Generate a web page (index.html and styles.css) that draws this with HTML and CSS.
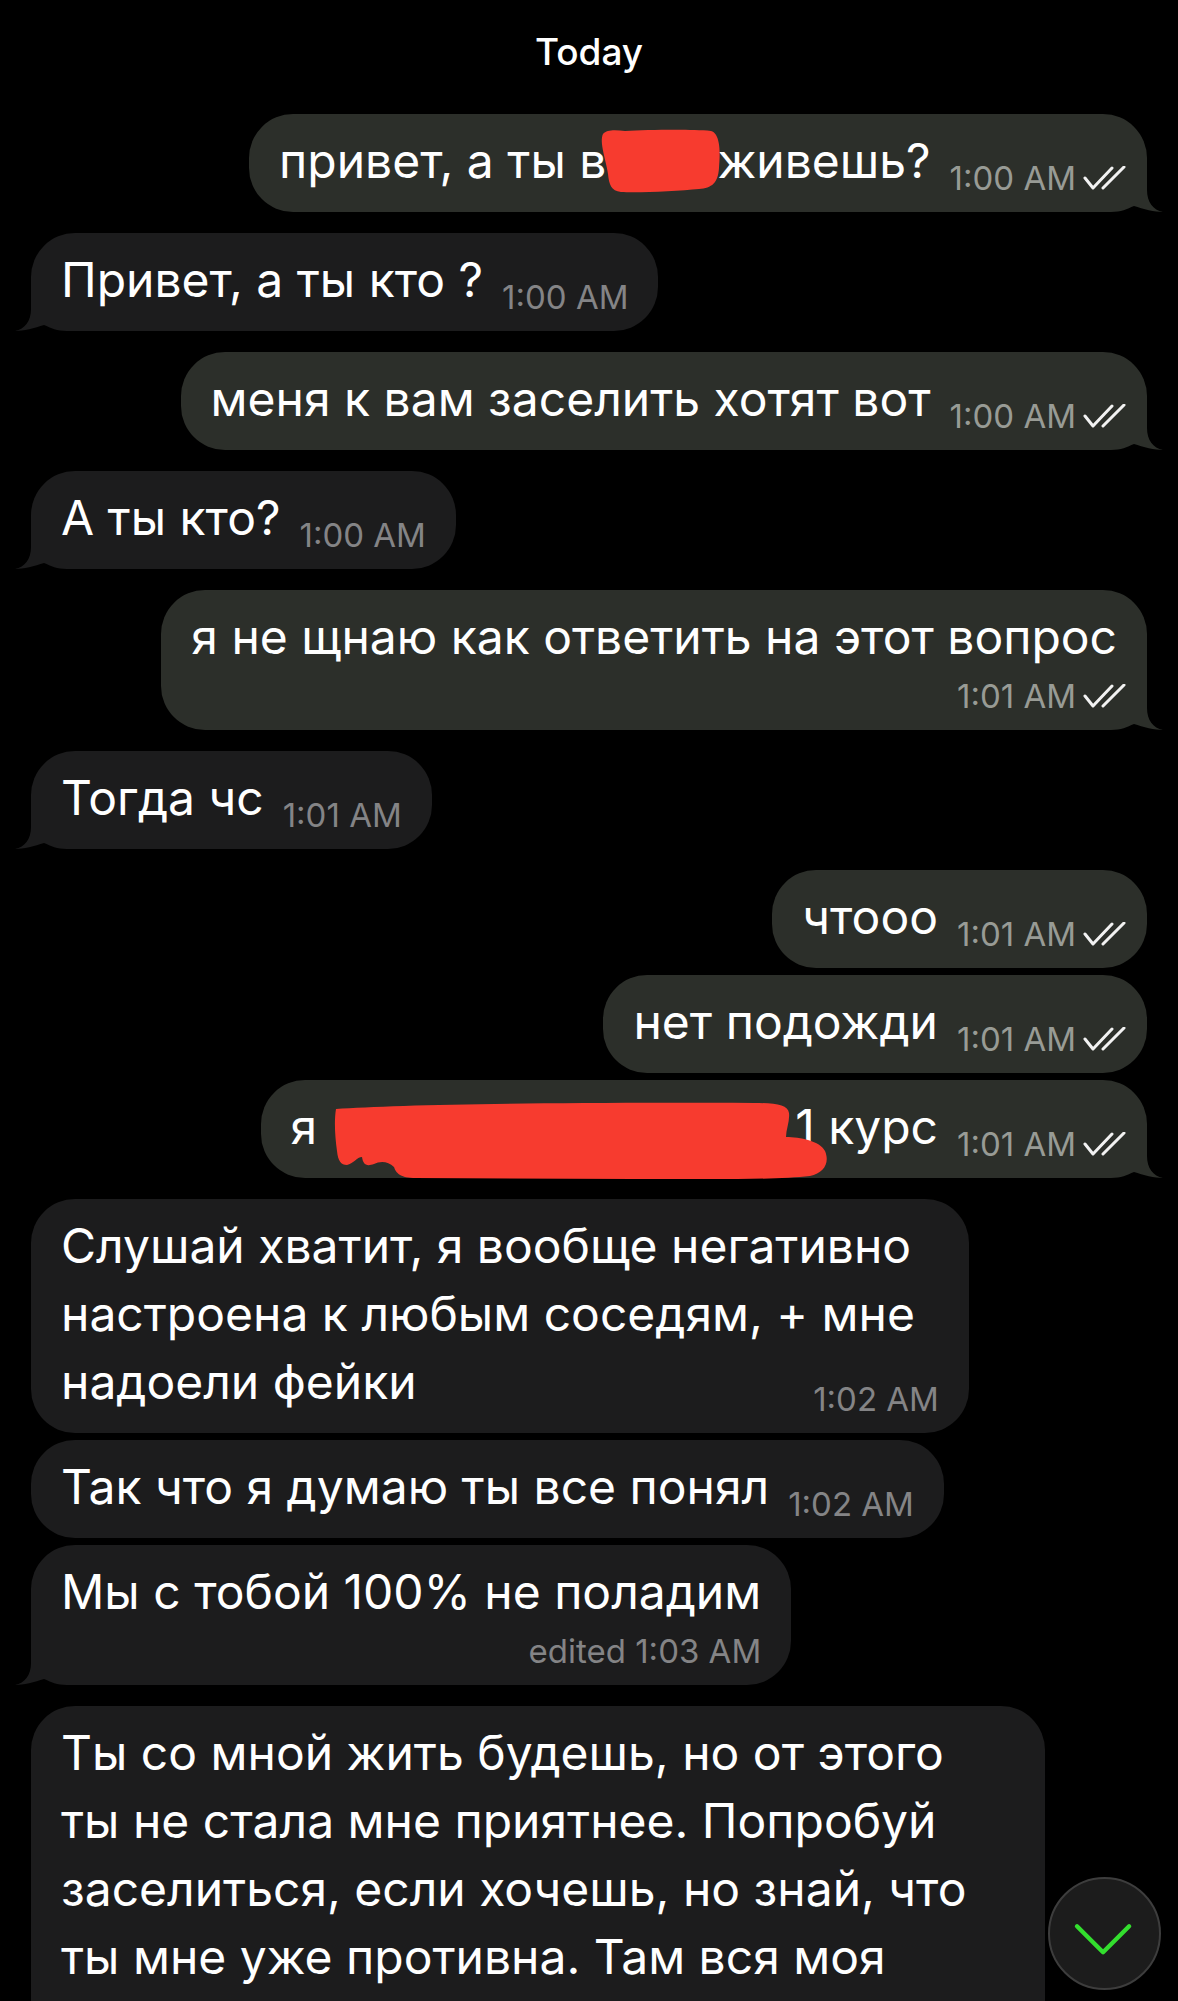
FILE: index.html
```html
<!DOCTYPE html>
<html lang="ru">
<head>
    <meta charset="UTF-8">
    <meta name="viewport" content="width=device-width, initial-scale=1.0">
    <title>Chat</title>
    <link rel="stylesheet" href="styles.css">
</head>
<body>

<div class="chat">
    <!-- Date header -->
    <div class="date">Today</div>

    <div class="msg out">
        <div class="bubble">
            <svg class="tail" viewBox="0 0 60 48"><path d="M44 0 L44 26 C44 38 50 46 60 48 C52 48 40 45 31 42 C24 45 18 48 8 48 L0 48 L0 0 Z"/></svg>
            <div class="row">
                <span class="text">привет, а ты в<span class="redact r1"><svg viewBox="0 0 124 66" width="124" height="66"><path d="M6 6 C10 1 20 2 28 3 C50 2 92 1 114 3 C122 5 124 20 122 40 C121 55 115 60 102 61 C82 63 42 65 24 64 C14 63 12 56 11 46 C9 32 2 14 6 6 Z"/></svg></span>живешь?</span>
                <span class="meta">1:00 AM<svg class="checks" viewBox="0 0 44 24"><polyline points="2,12 10,22 29,2"/><line x1="20" y1="22" x2="41" y2="1"/></svg></span>
            </div>
        </div>
    </div>

    <div class="msg in">
        <div class="bubble">
            <svg class="tail" viewBox="0 0 60 48"><path d="M44 0 L44 26 C44 38 50 46 60 48 C52 48 40 45 31 42 C24 45 18 48 8 48 L0 48 L0 0 Z"/></svg>
            <div class="row">
                <span class="text">Привет, а ты кто ?</span>
                <span class="meta">1:00 AM</span>
            </div>
        </div>
    </div>

    <div class="msg out">
        <div class="bubble">
            <svg class="tail" viewBox="0 0 60 48"><path d="M44 0 L44 26 C44 38 50 46 60 48 C52 48 40 45 31 42 C24 45 18 48 8 48 L0 48 L0 0 Z"/></svg>
            <div class="row">
                <span class="text">меня к вам заселить хотят вот</span>
                <span class="meta">1:00 AM<svg class="checks" viewBox="0 0 44 24"><polyline points="2,12 10,22 29,2"/><line x1="20" y1="22" x2="41" y2="1"/></svg></span>
            </div>
        </div>
    </div>

    <div class="msg in">
        <div class="bubble">
            <svg class="tail" viewBox="0 0 60 48"><path d="M44 0 L44 26 C44 38 50 46 60 48 C52 48 40 45 31 42 C24 45 18 48 8 48 L0 48 L0 0 Z"/></svg>
            <div class="row">
                <span class="text">А ты кто?</span>
                <span class="meta">1:00 AM</span>
            </div>
        </div>
    </div>

    <div class="msg out">
        <div class="bubble">
            <svg class="tail" viewBox="0 0 60 48"><path d="M44 0 L44 26 C44 38 50 46 60 48 C52 48 40 45 31 42 C24 45 18 48 8 48 L0 48 L0 0 Z"/></svg>
            <div class="line">я не щнаю как ответить на этот вопрос</div>
            <div class="row end">
                <span class="meta">1:01 AM<svg class="checks" viewBox="0 0 44 24"><polyline points="2,12 10,22 29,2"/><line x1="20" y1="22" x2="41" y2="1"/></svg></span>
            </div>
        </div>
    </div>

    <div class="msg in">
        <div class="bubble">
            <svg class="tail" viewBox="0 0 60 48"><path d="M44 0 L44 26 C44 38 50 46 60 48 C52 48 40 45 31 42 C24 45 18 48 8 48 L0 48 L0 0 Z"/></svg>
            <div class="row">
                <span class="text">Тогда чс</span>
                <span class="meta">1:01 AM</span>
            </div>
        </div>
    </div>

    <div class="msg out">
        <div class="bubble">
            <div class="row">
                <span class="text">чтооо</span>
                <span class="meta">1:01 AM<svg class="checks" viewBox="0 0 44 24"><polyline points="2,12 10,22 29,2"/><line x1="20" y1="22" x2="41" y2="1"/></svg></span>
            </div>
        </div>
    </div>

    <div class="msg out grouped">
        <div class="bubble">
            <div class="row">
                <span class="text">нет подожди</span>
                <span class="meta">1:01 AM<svg class="checks" viewBox="0 0 44 24"><polyline points="2,12 10,22 29,2"/><line x1="20" y1="22" x2="41" y2="1"/></svg></span>
            </div>
        </div>
    </div>

    <div class="msg out grouped">
        <div class="bubble">
            <svg class="tail" viewBox="0 0 60 48"><path d="M44 0 L44 26 C44 38 50 46 60 48 C52 48 40 45 31 42 C24 45 18 48 8 48 L0 48 L0 0 Z"/></svg>
            <div class="row">
                <span class="text">я<span class="redact r2"><svg viewBox="0 0 494 80" width="494" height="80"><path d="M2 8 C60 4 200 1 420 2 C442 2 454 4 455 12 C456 20 452 28 452 36 C466 36 486 40 491 50 C496 62 490 72 476 75 C440 79 380 78 300 78 L82 77 C66 77 62 72 60 66 C54 60 46 60 40 63 C32 66 29 63 28 56 C23 56 19 63 13 64 C7 64 4 60 3 50 C1 35 0 20 2 8 Z"/></svg></span>1 курс</span>
                <span class="meta">1:01 AM<svg class="checks" viewBox="0 0 44 24"><polyline points="2,12 10,22 29,2"/><line x1="20" y1="22" x2="41" y2="1"/></svg></span>
            </div>
        </div>
    </div>

    <div class="msg in">
        <div class="bubble roomy">
            <div class="line">Слушай хватит, я вообще негативно</div>
            <div class="line">настроена к любым соседям, + мне</div>
            <div class="row">
                <span class="text">надоели фейки</span>
                <span class="meta">1:02 AM</span>
            </div>
        </div>
    </div>

    <div class="msg in grouped">
        <div class="bubble">
            <div class="row">
                <span class="text">Так что я думаю ты все понял</span>
                <span class="meta">1:02 AM</span>
            </div>
        </div>
    </div>

    <div class="msg in grouped">
        <div class="bubble">
            <svg class="tail" viewBox="0 0 60 48"><path d="M44 0 L44 26 C44 38 50 46 60 48 C52 48 40 45 31 42 C24 45 18 48 8 48 L0 48 L0 0 Z"/></svg>
            <div class="line">Мы с тобой 100% не поладим</div>
            <div class="row end">
                <span class="meta">edited 1:03 AM</span>
            </div>
        </div>
    </div>

    <div class="msg in">
        <div class="bubble cut">
            <div class="line">Ты со мной жить будешь, но от этого</div>
            <div class="line">ты не стала мне приятнее. Попробуй</div>
            <div class="line">заселиться, если хочешь, но знай, что</div>
            <div class="line">ты мне уже противна. Там вся моя</div>
        </div>
    </div>

    <!-- Scroll down button -->
    <div class="scroll-down">
        <svg viewBox="0 0 113 113"><polyline points="28,49 55,76 82,49"/></svg>
    </div>
</div>

</body>
</html>
```

FILE: styles.css
```css
/* Page */
body {
    margin: 0;
    background-color: #000;
    color: #fff;
    font-family: 'Inter', 'Noto Sans', sans-serif;
}

.chat {
    position: relative;
    height: 100vh;
    overflow: hidden;
    padding: 30px 31px 0;
    box-sizing: border-box;
    display: flex;
    flex-direction: column;
}

/* Date header */
.date {
    text-align: center;
    font-size: 37px;
    font-weight: 500;
    line-height: 44px;
    margin-bottom: 19px;
}

/* Messages */
.msg {
    display: flex;
    margin-top: 21px;
}

.msg.grouped {
    margin-top: 7px;
}

.msg.out {
    justify-content: flex-end;
}

.bubble {
    position: relative;
    z-index: 0;
    border-radius: 44px;
    padding: 13px 30px 17px;
    font-size: 48px;
    line-height: 68px;
}

.out .bubble {
    background-color: #2c2f2a;
    padding-right: 20px;
}

.in .bubble {
    background-color: #1c1c1d;
}

.line {
    white-space: nowrap;
}

.out .line {
    margin-right: 10px;
}

.row {
    display: flex;
    align-items: flex-end;
    justify-content: space-between;
    white-space: nowrap;
}

.row.end {
    justify-content: flex-end;
    margin-top: 8px;
}

/* Time + checks */
.meta {
    display: flex;
    align-items: flex-end;
    gap: 7px;
    height: 34px;
    margin-left: 19px;
    font-size: 33px;
    line-height: 34px;
    color: #848486;
}

.out .meta {
    color: #989b95;
}

.checks {
    width: 44px;
    height: 24px;
    margin-bottom: 5px;
    fill: none;
    stroke: #f2f2f2;
    stroke-width: 3;
    stroke-linecap: round;
    stroke-linejoin: round;
}

/* Bubble tail, drawn behind the text */
.tail {
    position: absolute;
    z-index: -1;
    bottom: 0;
    width: 60px;
    height: 48px;
}

.out .tail {
    right: -16px;
    fill: #2c2f2a;
}

.in .tail {
    left: -16px;
    transform: scaleX(-1);
    fill: #1c1c1d;
}

/* Redacted parts */
.redact {
    position: relative;
    display: inline-block;
    height: 0;
}

.redact svg {
    position: absolute;
    fill: #f73b2f;
}

.redact.r1 {
    width: 111px;
}

.redact.r1 svg {
    left: -9px;
    bottom: -16px;
}

.redact.r2 {
    width: 478px;
}

.redact.r2 svg {
    left: 17px;
    bottom: -37px;
}

/* Special widths */
.bubble.roomy .line {
    padding-right: 24px;
}

.bubble.cut {
    width: 1014px;
    box-sizing: border-box;
    padding-bottom: 200px;
}

/* Scroll down button */
.scroll-down {
    position: absolute;
    right: 17px;
    bottom: 11px;
    width: 113px;
    height: 113px;
    box-sizing: border-box;
    border-radius: 50%;
    border: 2px solid #3d3d3d;
    background-color: #1c1c1c;
}

.scroll-down svg {
    display: block;
    width: 109px;
    height: 109px;
    fill: none;
    stroke: #33de2e;
    stroke-width: 4.5;
    stroke-linecap: round;
    stroke-linejoin: round;
}
```
